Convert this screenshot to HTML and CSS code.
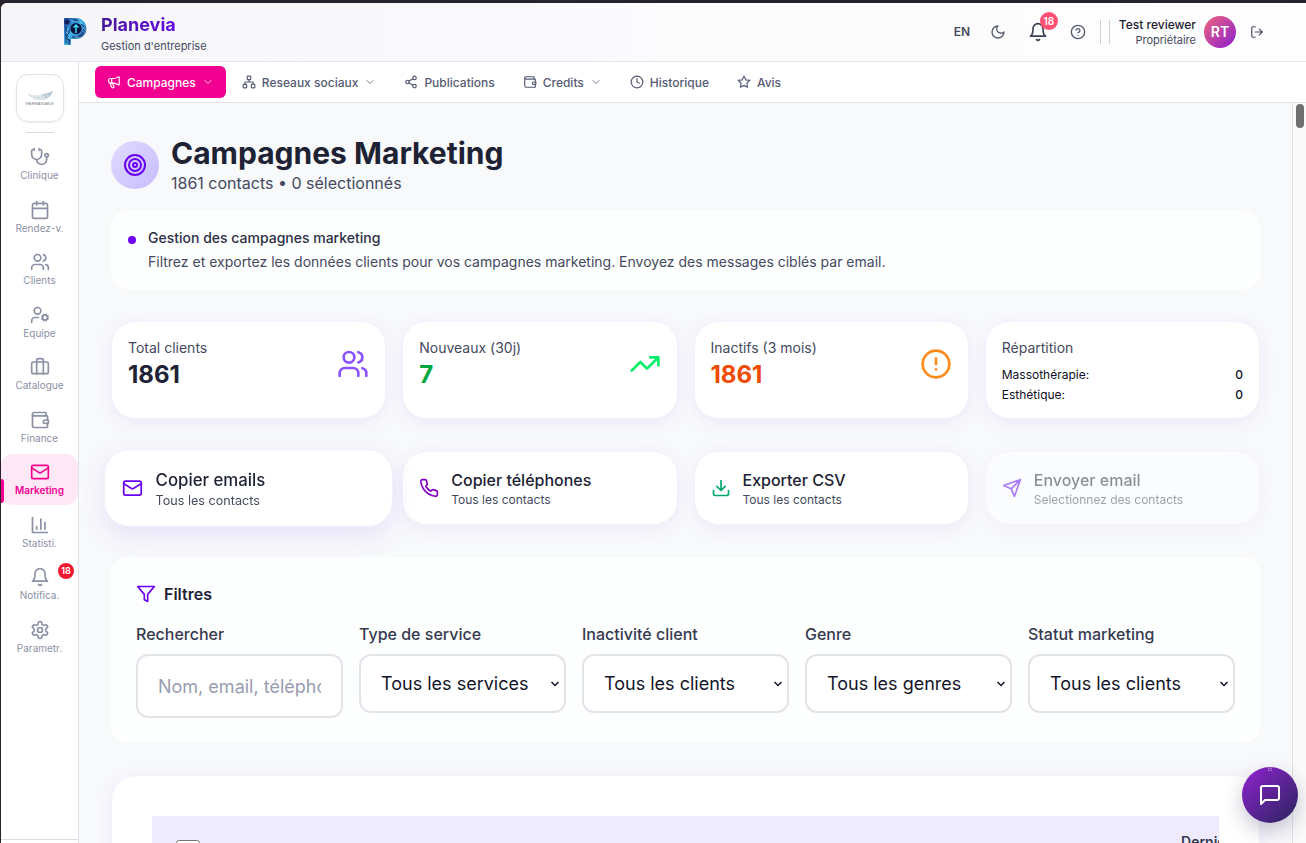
FILE: index.html
```html
<!DOCTYPE html>
<html lang="fr">
<head>
<meta charset="utf-8">
<meta name="viewport" content="width=device-width, initial-scale=1">
<title>Planevia – Campagnes Marketing</title>
<link rel="stylesheet" href="styles.css">
</head>
<body>
<svg class="sprite" aria-hidden="true">
  <symbol id="i-users" viewBox="0 0 24 24"><path d="M16 21v-2a4 4 0 0 0-4-4H6a4 4 0 0 0-4 4v2"/><circle cx="9" cy="7" r="4"/><path d="M22 21v-2a4 4 0 0 0-3-3.87M16 3.13a4 4 0 0 1 0 7.75"/></symbol>
  <symbol id="i-mail" viewBox="0 0 24 24"><rect x="2" y="4" width="20" height="16" rx="2"/><path d="m22 7-8.97 5.7a1.94 1.94 0 0 1-2.06 0L2 7"/></symbol>
  <symbol id="i-wallet" viewBox="0 0 24 24"><path d="M21 12V7H5a2 2 0 0 1 0-4h14v4"/><path d="M3 5v14a2 2 0 0 0 2 2h16v-5"/><path d="M18 12a2 2 0 0 0 0 4h4v-4Z"/></symbol>
  <symbol id="i-bell" viewBox="0 0 24 24"><path d="M6 8a6 6 0 0 1 12 0c0 7 3 9 3 9H3s3-2 3-9"/><path d="M10.3 21a1.94 1.94 0 0 0 3.4 0"/></symbol>
  <symbol id="i-chevron" viewBox="0 0 24 24"><path d="m6 9 6 6 6-6"/></symbol>
</svg>
<div class="app">
  <header class="topbar">
    <a class="brand" href="#">
      <svg class="brand-mark" viewBox="0 0 24 30" aria-hidden="true">
        <defs>
          <linearGradient id="pg" x1="0" y1="0" x2="1" y2="1"><stop offset="0" stop-color="#1d3f9e"/><stop offset=".45" stop-color="#3fb4ea"/><stop offset="1" stop-color="#1b2f7c"/></linearGradient>
        </defs>
        <path d="M1 2Q1 1 2 1H13A10 10 0 0 1 13 22H8V27Q8 28 7 28H2Q1 28 1 27Z" fill="url(#pg)"/>
        <path d="M3 9v17M6 12v4l-2 2v4l3 2M10 3h4l3 2M18 7l3 3v4M9 20h5l4-2M20 15l-2 4M6 22v5" fill="none" stroke="#142660" stroke-width="1"/>
        <path d="M8 3l3 2M15 3l4 4M20 10l2 3M5 11v3M3 15l2 2M12 20h3" fill="none" stroke="#7ddcff" stroke-width=".8"/>
        <circle cx="4" cy="5" r="2.6" fill="#17205c"/>
        <circle cx="13" cy="11.500" r="5.600" fill="#0b1440"/>
        <path d="M13 16V8M10.500 10.500 13 8l2.500 2.500" fill="none" stroke="#3fd8f5" stroke-width="1.500"/>
      </svg>
      <span class="brand-text"><strong class="brand-name">Planevia</strong><span class="brand-sub">Gestion d'entreprise</span></span>
    </a>
    <div class="top-actions">
      <button class="icon-btn lang" type="button">EN</button>
      <button class="icon-btn" type="button" aria-label="Mode sombre"><svg class="ic ic-16" viewBox="0 0 24 24"><path d="M12 3a6 6 0 0 0 9 9 9 9 0 1 1-9-9Z"/></svg></button>
      <button class="icon-btn bell" type="button" aria-label="Notifications"><svg class="ic ic-20"><use href="#i-bell"/></svg><span class="bell-count">18</span></button>
      <button class="icon-btn" type="button" aria-label="Aide"><svg class="ic ic-16" viewBox="0 0 24 24"><circle cx="12" cy="12" r="10"/><path d="M9.090 9a3 3 0 0 1 5.830 1c0 2-3 3-3 3M12 17h.01"/></svg></button>
      <span class="separator"></span>
      <div class="user">
        <span class="user-text"><span class="user-name">Test reviewer</span><span class="user-role">Propriétaire</span></span>
        <span class="avatar">RT</span>
      </div>
      <button class="icon-btn logout" type="button" aria-label="Déconnexion"><svg class="ic ic-14" viewBox="0 0 24 24"><path d="M9 21H5a2 2 0 0 1-2-2V5a2 2 0 0 1 2-2h4M16 17l5-5-5-5M21 12H9"/></svg></button>
    </div>
  </header>

  <div class="body">
    <nav class="sidebar" aria-label="Navigation principale">
      <a class="tenant" href="#" aria-label="Spa Renaissance">
        <svg class="feather" viewBox="0 0 30 12" aria-hidden="true"><path d="M1 3C4 6 11 7 17 5c5-1.500 8-2 12-4-1 5-5 9-11 10C11 11.500 4 9 1 3Z" fill="#d5e0e3"/><path d="M17 5c5-1.500 8-2 12-4-1 4-4 7-8 8Z" fill="#b4cad0"/><path d="M6 6l3 4M10 6l3 5M14 6l3 5M18 5l3 5M22 4l2 4" stroke="#f4f8f8" stroke-width=".6"/></svg>
        <span class="tenant-name">SPA RENAISSANCE</span>
      </a>
      <span class="side-rule"></span>
      <ul class="side-list">
        <li><a class="side-item" href="#"><svg class="ic ic-20" viewBox="0 0 24 24"><path d="M11 2v2M5 2v2M5 3H4a2 2 0 0 0-2 2v4a6 6 0 0 0 12 0V5a2 2 0 0 0-2-2h-1"/><path d="M8 15a6 6 0 0 0 12 0v-3"/><circle cx="20" cy="10" r="2"/></svg>Clinique</a></li>
        <li><a class="side-item" href="#"><svg class="ic ic-20" viewBox="0 0 24 24"><rect x="3" y="4" width="18" height="18" rx="2"/><path d="M16 2v4M8 2v4M3 10h18"/></svg>Rendez-v.</a></li>
        <li><a class="side-item" href="#"><svg class="ic ic-20"><use href="#i-users"/></svg>Clients</a></li>
        <li><a class="side-item" href="#"><svg class="ic ic-20" viewBox="0 0 24 24"><circle cx="18" cy="15" r="3"/><circle cx="9" cy="7" r="4"/><path d="M10 15H6a4 4 0 0 0-4 4v2M21.700 16.400l-.9-.3M15.200 13.900l-.9-.3M16.600 18.700l.3-.9M19.100 12.200l.3-.9M19.600 18.700l-.4-1M16.800 12.300l-.4-1M14.300 16.600l1-.4M20.700 13.800l1-.4"/></svg>Equipe</a></li>
        <li><a class="side-item" href="#"><svg class="ic ic-20" viewBox="0 0 24 24"><path d="M16 20V4a2 2 0 0 0-2-2h-4a2 2 0 0 0-2 2v16"/><rect x="2" y="6" width="20" height="14" rx="2"/></svg>Catalogue</a></li>
        <li><a class="side-item" href="#"><svg class="ic ic-20"><use href="#i-wallet"/></svg>Finance</a></li>
        <li><a class="side-item is-active" href="#" aria-current="page"><svg class="ic ic-20"><use href="#i-mail"/></svg>Marketing</a></li>
        <li><a class="side-item" href="#"><svg class="ic ic-20" viewBox="0 0 24 24"><path d="M3 3v18h18M18 17V9M13 17V5M8 17v-3"/></svg>Statisti.</a></li>
        <li><a class="side-item" href="#"><svg class="ic ic-20"><use href="#i-bell"/></svg>Notifica.<span class="side-count">18</span></a></li>
        <li><a class="side-item" href="#"><svg class="ic ic-20" viewBox="0 0 24 24"><path d="M12.220 2h-.44a2 2 0 0 0-2 2v.18a2 2 0 0 1-1 1.730l-.43.25a2 2 0 0 1-2 0l-.15-.08a2 2 0 0 0-2.730.73l-.22.38a2 2 0 0 0 .73 2.730l.15.1a2 2 0 0 1 1 1.720v.51a2 2 0 0 1-1 1.740l-.15.09a2 2 0 0 0-.73 2.730l.22.38a2 2 0 0 0 2.730.73l.15-.08a2 2 0 0 1 2 0l.43.25a2 2 0 0 1 1 1.730V20a2 2 0 0 0 2 2h.44a2 2 0 0 0 2-2v-.18a2 2 0 0 1 1-1.730l.43-.25a2 2 0 0 1 2 0l.15.08a2 2 0 0 0 2.730-.73l.22-.39a2 2 0 0 0-.73-2.730l-.15-.08a2 2 0 0 1-1-1.740v-.5a2 2 0 0 1 1-1.740l.15-.09a2 2 0 0 0 .73-2.730l-.22-.38a2 2 0 0 0-2.730-.73l-.15.08a2 2 0 0 1-2 0l-.43-.25a2 2 0 0 1-1-1.730V4a2 2 0 0 0-2-2z"/><circle cx="12" cy="12" r="3"/></svg>Parametr.</a></li>
      </ul>
      <div class="side-foot"></div>
    </nav>

    <div class="workspace">
      <nav class="tabs" aria-label="Marketing">
        <a class="tab is-active" href="#"><svg class="ic ic-14" viewBox="0 0 24 24"><path d="M11 6a13 13 0 0 0 8.400-2.800A1 1 0 0 1 21 4v12a1 1 0 0 1-1.600.8A13 13 0 0 0 11 14H5a2 2 0 0 1-2-2V8a2 2 0 0 1 2-2z"/><path d="M6 14a12 12 0 0 0 2.400 7.200 2 2 0 0 0 3.200-2.400A8 8 0 0 1 10 14M8 6v8"/></svg>Campagnes<svg class="ic ic-12"><use href="#i-chevron"/></svg></a>
        <a class="tab" href="#"><svg class="ic ic-14" viewBox="0 0 24 24"><rect x="16" y="16" width="6" height="6" rx="1"/><rect x="2" y="16" width="6" height="6" rx="1"/><rect x="9" y="2" width="6" height="6" rx="1"/><path d="M5 16v-3a1 1 0 0 1 1-1h12a1 1 0 0 1 1 1v3M12 12V8"/></svg>Reseaux sociaux<svg class="ic ic-12"><use href="#i-chevron"/></svg></a>
        <a class="tab" href="#"><svg class="ic ic-14" viewBox="0 0 24 24"><circle cx="18" cy="5" r="3"/><circle cx="6" cy="12" r="3"/><circle cx="18" cy="19" r="3"/><path d="m8.590 13.510 6.830 3.980M15.410 6.510l-6.820 3.980"/></svg>Publications</a>
        <a class="tab" href="#"><svg class="ic ic-14"><use href="#i-wallet"/></svg>Credits<svg class="ic ic-12"><use href="#i-chevron"/></svg></a>
        <a class="tab" href="#"><svg class="ic ic-14" viewBox="0 0 24 24"><circle cx="12" cy="12" r="10"/><path d="M12 6v6l4 2"/></svg>Historique</a>
        <a class="tab" href="#"><svg class="ic ic-14" viewBox="0 0 24 24"><path d="m12 2 3.090 6.260L22 9.270l-5 4.870 1.180 6.880L12 17.770l-6.180 3.250L7 14.140 2 9.270l6.910-1.010L12 2z"/></svg>Avis</a>
      </nav>

      <div class="viewport">
        <main class="page">
          <div class="page-top">
            <div class="page-head">
              <span class="page-icon"><svg class="ic ic-24" viewBox="0 0 24 24"><circle cx="12" cy="12" r="10"/><circle cx="12" cy="12" r="6"/><circle cx="12" cy="12" r="2"/></svg></span>
              <div>
                <h1>Campagnes Marketing</h1>
                <p class="page-sub">1861 contacts • 0 sélectionnés</p>
              </div>
            </div>
            <section class="notice">
              <span class="notice-dot"></span>
              <div>
                <h2 class="notice-title">Gestion des campagnes marketing</h2>
                <p class="notice-text">Filtrez et exportez les données clients pour vos campagnes marketing. Envoyez des messages ciblés par email.</p>
              </div>
            </section>
          </div>

          <section class="grid-4">
            <article class="card stat"><div><h3 class="stat-label">Total clients</h3><p class="stat-value">1861</p></div><svg class="ic ic-32 c-violet"><use href="#i-users"/></svg></article>
            <article class="card stat"><div><h3 class="stat-label">Nouveaux (30j)</h3><p class="stat-value v-green">7</p></div><svg class="ic ic-32 c-green" viewBox="0 0 24 24"><path d="m22 7-8.500 8.500-5-5L2 17M16 7h6v6"/></svg></article>
            <article class="card stat"><div><h3 class="stat-label">Inactifs (3 mois)</h3><p class="stat-value v-orange">1861</p></div><svg class="ic ic-32 c-orange" viewBox="0 0 24 24"><circle cx="12" cy="12" r="10"/><path d="M12 8v4M12 16h.01"/></svg></article>
            <article class="card"><h3 class="stat-label">Répartition</h3>
              <dl class="split"><div><dt>Massothérapie:</dt><dd>0</dd></div><div><dt>Esthétique:</dt><dd>0</dd></div></dl>
            </article>
          </section>

          <section class="grid-4">
            <button class="card action is-hovered" type="button"><svg class="ic ic-20 c-indigo"><use href="#i-mail"/></svg><span class="action-text"><span class="action-title">Copier emails</span><span class="action-sub">Tous les contacts</span></span></button>
            <button class="card action" type="button"><svg class="ic ic-20 c-purple" viewBox="0 0 24 24"><path d="M22 16.920v3a2 2 0 0 1-2.180 2 19.790 19.790 0 0 1-8.630-3.070 19.500 19.500 0 0 1-6-6 19.790 19.790 0 0 1-3.070-8.670A2 2 0 0 1 4.110 2h3a2 2 0 0 1 2 1.720 12.840 12.840 0 0 0 .7 2.810 2 2 0 0 1-.45 2.110L8.090 9.910a16 16 0 0 0 6 6l1.270-1.270a2 2 0 0 1 2.110-.45 12.840 12.840 0 0 0 2.810.7A2 2 0 0 1 22 16.920z"/></svg><span class="action-text"><span class="action-title">Copier téléphones</span><span class="action-sub">Tous les contacts</span></span></button>
            <button class="card action" type="button"><svg class="ic ic-20 c-teal" viewBox="0 0 24 24"><path d="M21 15v4a2 2 0 0 1-2 2H5a2 2 0 0 1-2-2v-4M7 10l5 5 5-5M12 15V3"/></svg><span class="action-text"><span class="action-title">Exporter CSV</span><span class="action-sub">Tous les contacts</span></span></button>
            <button class="card action" type="button" disabled><svg class="ic ic-20 c-send" viewBox="0 0 24 24"><path d="m22 2-7 20-4-9-9-4ZM22 2 11 13"/></svg><span class="action-text"><span class="action-title">Envoyer email</span><span class="action-sub">Selectionnez des contacts</span></span></button>
          </section>

          <section class="filters">
            <h2 class="filters-title"><svg class="ic ic-20 c-indigo" viewBox="0 0 24 24"><path d="M22 3H2l8 9.460V19l4 2v-8.540L22 3z"/></svg>Filtres</h2>
            <div class="filters-grid">
              <div class="field"><label for="q">Rechercher</label><input id="q" class="control" type="text" placeholder="Nom, email, téléphone..."></div>
              <div class="field"><label for="service">Type de service</label><select id="service" class="control"><option>Tous les services</option></select></div>
              <div class="field"><label for="inactive">Inactivité client</label><select id="inactive" class="control"><option>Tous les clients</option></select></div>
              <div class="field"><label for="genre">Genre</label><select id="genre" class="control"><option>Tous les genres</option></select></div>
              <div class="field"><label for="statut">Statut marketing</label><select id="statut" class="control"><option>Tous les clients</option></select></div>
            </div>
          </section>

          <section class="card table-card">
            <div class="table-scroll">
              <table class="contacts">
                <thead><tr><th class="col-check"><input class="check" type="checkbox" aria-label="Tout sélectionner"></th><th class="col-last">Dernière visite</th></tr></thead>
              </table>
            </div>
          </section>
        </main>
        <div class="scrollbar" aria-hidden="true"><span class="thumb"></span></div>
      </div>
    </div>
  </div>
</div>
<button class="chat" type="button" aria-label="Ouvrir le chat"><span class="chat-grip">⠛</span><svg class="ic ic-24" viewBox="0 0 24 24"><path d="M21 15a2 2 0 0 1-2 2H7l-4 4V5a2 2 0 0 1 2-2h14a2 2 0 0 1 2 2z"/></svg></button>
</body>
</html>
```
FILE: styles.css
```css
*, *::before, *::after { box-sizing: border-box; }
html, body { height: 100%; }
body {
  margin: 0;
  padding: 3px 0 0 1px;
  overflow: hidden;
  background: #27222c;
  color: #1e2235;
  font-family: Inter, "Liberation Sans", sans-serif;
  font-size: 16px;
  line-height: 24px;
}
h1, h2, h3, p, ul, dl, dd { margin: 0; padding: 0; }
ul { list-style: none; }
a { color: inherit; text-decoration: none; }
button, input, select { font: inherit; color: inherit; }
button { border: 0; background: none; padding: 0; cursor: pointer; }
.sprite { display: none; }

.ic { flex: none; display: block; fill: none; stroke: currentColor; stroke-width: 2; stroke-linecap: round; stroke-linejoin: round; }
.ic-12 { width: 12px; height: 12px; }
.ic-14 { width: 14px; height: 14px; }
.ic-16 { width: 16px; height: 16px; }
.ic-20 { width: 20px; height: 20px; }
.ic-24 { width: 24px; height: 24px; }
.ic-32 { width: 32px; height: 32px; }
.c-violet { color: #8b54ff; }
.c-green { color: #00ee68; }
.c-orange { color: #ff8a1c; }
.c-indigo { color: #6a00f0; }
.c-purple { color: #8500c4; }
.c-teal { color: #00a870; }
.c-send { color: #5c00ee; }

.app { display: flex; flex-direction: column; height: 100%; overflow: hidden; border-top-left-radius: 6px; background: #fff; }
.topbar {
  display: flex; align-items: center; justify-content: space-between; flex: none;
  height: 59px; padding: 0 32px 0 60px;
  border-bottom: 1px solid #e4e5ea;
  background: linear-gradient(90deg, #f6f6f8, #fbfbfd 50%, #fefefe);
}
.brand { display: flex; align-items: center; gap: 12px; }
.brand-mark { width: 28px; height: 30px; }
.brand-text { display: flex; flex-direction: column; padding-top: 4px; }
.brand-name {
  font-size: 18px; line-height: 24px; font-weight: 700;
  background: linear-gradient(90deg, #45189c, #7300ff);
  -webkit-background-clip: text; background-clip: text; color: transparent;
}
.brand-sub { font-size: 11px; line-height: 18px; color: #454a5e; }

.top-actions { display: flex; align-items: center; gap: 4px; color: #565a70; }
.icon-btn { display: flex; align-items: center; justify-content: center; width: 32px; height: 32px; }
.lang { font-size: 12px; line-height: 16px; font-weight: 600; color: #454a5e; }
.bell { position: relative; width: 40px; color: #3d4154; }
.bell-count {
  position: absolute; top: -4px; right: 0; width: 18px; height: 18px; border-radius: 50%;
  background: #ff4f74; color: #fff; font-size: 10px; line-height: 18px; font-weight: 600; text-align: center;
}
.separator { width: 1px; height: 24px; margin: 0 4px 0 2px; background: #cfd0d8; }
.user { display: flex; align-items: center; gap: 8px; }
.user-text { display: flex; flex-direction: column; justify-content: center; height: 24px; padding-left: 9px; border-left: 1px solid #cfd0d8; text-align: right; }
.user-name { font-size: 12px; line-height: 16px; font-weight: 500; color: #1b1c30; }
.user-role { font-size: 11px; line-height: 15px; color: #454a5e; }
.avatar {
  display: flex; align-items: center; justify-content: center; width: 32px; height: 32px; border-radius: 50%;
  background: linear-gradient(135deg, #f0647c, #8a1fd0); color: #fff; font-size: 14px; font-weight: 600;
}
.logout { width: 34px; color: #454a5e; }

.body { display: flex; flex: 1; min-height: 0; }
.sidebar { display: flex; flex-direction: column; align-items: center; flex: none; width: 78px; padding-top: 12px; border-right: 1px solid #e2e2ea; background: #fff; }
.tenant {
  display: flex; flex-direction: column; align-items: center; justify-content: center; gap: 1px; flex: none;
  width: 48px; height: 48px; border: 1px solid #e2e2ea; border-radius: 12px; box-shadow: 0 1px 2px rgba(30, 30, 60, .08);
}
.feather { width: 28px; height: 11px; }
.tenant-name { font-size: 3px; line-height: 5px; color: #6c7276; white-space: nowrap; font-family: "Liberation Sans", sans-serif; }
.side-rule { flex: none; width: 28px; height: 1px; margin: 10px 0 6px; background: #dcdce4; }
.side-list { display: flex; flex-direction: column; gap: 2px; width: 100%; }
.side-item {
  position: relative; display: flex; flex-direction: column; align-items: center; gap: 2px; padding: 8px 0;
  border-radius: 12px; color: #8c90a4; font-size: 10px; line-height: 1.25;
}
.side-item.is-active { background: #ffe8f5; color: #f20091; font-weight: 600; }
.side-item.is-active::before { content: ""; position: absolute; left: 0; bottom: 2px; width: 3px; height: 24px; border-radius: 0 4px 4px 0; background: #f20091; }
.side-count { position: absolute; top: 4px; right: 4px; width: 16px; height: 16px; border-radius: 50%; background: #f01a30; color: #fff; font-size: 9px; line-height: 16px; font-weight: 600; text-align: center; }
.side-foot { width: 100%; height: 4px; margin-top: auto; border-top: 1px solid #dcdce4; }

.workspace { display: flex; flex-direction: column; flex: 1; min-width: 0; }
.tabs { display: flex; align-items: center; gap: 4px; flex: none; height: 41px; padding: 0 16px; border-bottom: 1px solid #e2e2e8; background: #fff; }
.tab { display: flex; align-items: center; gap: 6px; height: 32px; padding: 0 12px; border-radius: 6px; color: #565a72; font-size: 12px; line-height: 17px; font-weight: 500; white-space: nowrap; }
.tab.is-active { background: #f20091; color: #fff; }
.tab .ic-12 { opacity: .8; }

.viewport { display: flex; flex: 1; min-height: 0; }
.page { display: flex; flex-direction: column; gap: 32px; flex: 1; min-width: 0; padding: 32px; overflow: hidden; background: #f8f9fb; }
.page > * { flex: none; }
.scrollbar { flex: none; width: 14px; padding: 1px 2px 0 3px; border-left: 1px solid #e2e2e6; background: #fafafa; }
.thumb { display: block; width: 8px; height: 24px; border-radius: 4px; background: #707070; }

.page-top { display: flex; flex-direction: column; gap: 16px; }
.page-head { display: flex; align-items: center; gap: 12px; }
.page-icon { display: flex; align-items: center; justify-content: center; width: 48px; height: 48px; border-radius: 50%; background: linear-gradient(135deg, #e0dbff, #c6bdff); color: #6a00f0; }
h1 { font-size: 30px; line-height: 36px; font-weight: 700; }
.page-sub { color: #454a5e; }
.notice { display: flex; gap: 12px; padding: 16px; border-radius: 16px; background: #fdfefe; font-size: 14px; line-height: 22px; }
.notice > div { display: flex; flex-direction: column; gap: 2px; }
.notice-dot { flex: none; width: 8px; height: 8px; margin: 9px 0 0 1px; border-radius: 50%; background: #6f00f5; }
.notice-title { font-size: 14px; font-weight: 500; color: #2c3045; }
.notice-text { color: #454a5e; }

.grid-4 { display: grid; grid-template-columns: repeat(4, minmax(0, 1fr)); gap: 16px; }
.card { padding: 16px; border: 1px solid #f3f2fc; border-radius: 24px; background: #fff; background-clip: padding-box; box-shadow: 0 4px 16px rgba(98, 60, 234, .08); }
.stat { display: flex; align-items: flex-start; justify-content: space-between; }
.stat .ic { margin-top: 10px; }
.stat-label { font-size: 14px; line-height: 20px; font-weight: 400; color: #454a5e; }
.stat-value { font-size: 24px; line-height: 34px; font-weight: 700; }
.v-green { color: #00a63e; }
.v-orange { color: #ee4a00; }
.split { display: flex; flex-direction: column; gap: 2px; margin-top: 8px; font-size: 12px; line-height: 18px; color: #0f1024; margin-bottom: -2px; }
.split div { display: flex; justify-content: space-between; }
.split dd { font-weight: 500; }

.action { display: flex; align-items: center; gap: 12px; text-align: left; }
.action-text { display: flex; flex-direction: column; }
.action-title { font-weight: 500; }
.action-sub { font-size: 12px; line-height: 16px; color: #454a5e; }
.action.is-hovered { transform: scale(1.05); box-shadow: 0 8px 24px rgba(98, 60, 234, .12); }
.action:disabled { opacity: .5; cursor: not-allowed; }

.filters { padding: 25px; border-radius: 16px; background: #fdfefe; }
.filters-title { display: flex; align-items: center; gap: 8px; margin-bottom: 16px; font-size: 16px; line-height: 24px; font-weight: 600; }
.filters-grid { display: grid; grid-template-columns: repeat(5, minmax(0, 1fr)); gap: 16px; align-items: start; }
.field { display: flex; flex-direction: column; gap: 8px; }
.field label { font-weight: 500; color: #363a50; }
.control { width: 100%; border: 2px solid #e3e3ea; border-radius: 12px; background: #fff; color: #14152a; font-size: 18px; line-height: 28px; }
input.control { height: 64px; padding: 16px 20px; }
input.control::placeholder { color: #9a9db0; }
select.control {
  height: 59px; padding: 0 16px 0 20px; appearance: none;
  background: #fff url("data:image/svg+xml,%3Csvg xmlns='http://www.w3.org/2000/svg' viewBox='0 0 10 10'%3E%3Cpath d='M1.5 3 5 6.500 8.500 3' fill='none' stroke='%2314152a' stroke-width='1.500'/%3E%3C/svg%3E") no-repeat right 4px center / 10px 10px;
}

.table-card { padding: 40px; }
.table-scroll { overflow: hidden; }
.contacts { width: 106%; border-collapse: collapse; table-layout: fixed; background: #eeebfe; }
.contacts th { padding: 16px 24px; text-align: left; font-size: 14px; line-height: 20px; font-weight: 600; color: #363a50; }
.col-last { width: 126px; }
.check { display: block; width: 24px; height: 24px; margin: 0; }

.chat {
  position: fixed; right: 8px; bottom: 20px; display: flex; align-items: center; justify-content: center;
  width: 56px; height: 56px; border-radius: 50%; background: linear-gradient(135deg, #9223d2, #28245c);
  color: #fff; box-shadow: 0 8px 20px rgba(40, 30, 80, .25);
}
.chat-grip { position: absolute; top: 0; left: 0; right: 0; font-size: 8px; line-height: 8px; text-align: center; color: rgba(255, 255, 255, .5); }
```
